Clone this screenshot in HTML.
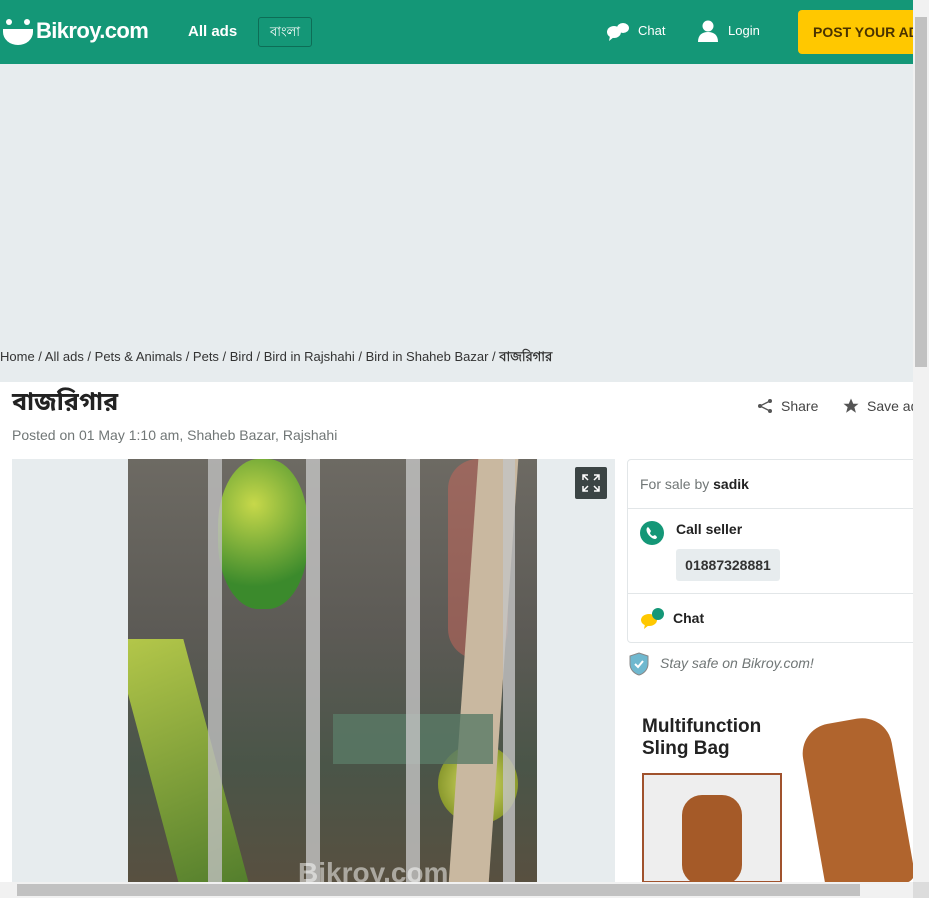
<!DOCTYPE html>
<html><head><meta charset="utf-8"><style>
*{box-sizing:border-box;margin:0;padding:0}
body{width:929px;height:898px;overflow:hidden;position:relative;background:#fff;font-family:"Liberation Sans","Noto Sans CJK SC",sans-serif;color:#222}
.hdr{position:absolute;left:0;top:0;width:913px;height:64px;background:#149777;color:#fff}
.ab{position:absolute}
.gray{position:absolute;left:0;top:64px;width:913px;height:318px;background:#e7ecee}
.crumb{position:absolute;left:0;top:348px;font-size:13px;color:#333;white-space:nowrap}
.card{position:absolute;left:627px;top:459px;width:300px;height:184px;border:1px solid #e2e6e8;border-radius:4px;background:#fff}
</style></head><body>
<div class="hdr">
 <svg class="ab" style="left:2px;top:18px" width="32" height="28" viewBox="0 0 32 28"><circle cx="7" cy="4" r="3" fill="#fff"/><circle cx="25" cy="4" r="3" fill="#fff"/><path d="M1 11h30v3a15 13 0 0 1-30 0z" fill="#fff"/></svg>
 <div class="ab" style="left:36px;top:18px;font-size:22px;font-weight:bold;letter-spacing:-0.6px">Bikroy.com</div>
 <div class="ab" style="left:188px;top:23px;font-size:15px;font-weight:bold">All ads</div>
 <div class="ab" style="left:258px;top:17px;width:54px;height:30px;border:1px solid #0d6d56;border-radius:3px;font-size:13px;text-align:center;line-height:28px">বাংলা</div>
 <svg class="ab" style="left:606px;top:22px" width="24" height="20" viewBox="0 0 24 20"><ellipse cx="8" cy="10" rx="7" ry="6" fill="#fff"/><path d="M4 14l-1 5 5-4z" fill="#fff"/><ellipse cx="17" cy="6" rx="6" ry="5" fill="#fff"/></svg>
 <div class="ab" style="left:638px;top:23px;font-size:13px">Chat</div>
 <svg class="ab" style="left:697px;top:20px" width="22" height="22" viewBox="0 0 22 22"><circle cx="11" cy="6" r="5.5" fill="#fff"/><path d="M1 22c0-7 4-10 10-10s10 3 10 10z" fill="#fff"/></svg>
 <div class="ab" style="left:728px;top:23px;font-size:13px">Login</div>
 <div class="ab" style="left:798px;top:10px;width:130px;height:44px;background:#ffc800;border-radius:4px;color:#4a3300;font-weight:bold;font-size:14px;line-height:44px;padding-left:15px;white-space:nowrap;overflow:hidden">POST YOUR AD</div>
</div>
<div class="gray"></div>
<div class="crumb">Home / All ads / Pets &amp; Animals / Pets / Bird / Bird in Rajshahi / Bird in Shaheb Bazar / <b>বাজরিগার</b></div>
<div class="ab" style="left:12px;top:388px;font-size:25px;font-weight:bold;font-family:'Liberation Sans','Noto Sans Bengali','Lohit Bengali',sans-serif">বাজরিগার</div>
<div class="ab" style="left:12px;top:427px;font-size:14px;color:#707676">Posted on 01 May 1:10 am, Shaheb Bazar, Rajshahi</div>
<svg class="ab" style="left:757px;top:398px" width="16" height="16" viewBox="0 0 16 16"><circle cx="13" cy="3" r="2" fill="#555"/><circle cx="3" cy="8" r="2" fill="#555"/><circle cx="13" cy="13" r="2" fill="#555"/><path d="M13 3L3 8l10 5" stroke="#555" stroke-width="1.3" fill="none"/></svg>
<div class="ab" style="left:781px;top:398px;font-size:14px;color:#444">Share</div>
<svg class="ab" style="left:842px;top:397px" width="18" height="18" viewBox="0 0 24 24"><path d="M12 2l3 7h7l-5.5 4.5 2 7.5L12 16.5 5.5 21l2-7.5L2 9h7z" fill="#555"/></svg>
<div class="ab" style="left:867px;top:398px;font-size:14px;color:#444;width:46px;overflow:hidden;white-space:nowrap">Save ad</div>

<div class="ab" style="left:12px;top:459px;width:603px;height:439px;background:#e7ecee"></div>
<div class="ab" style="left:128px;top:459px;width:409px;height:439px;overflow:hidden;background:linear-gradient(180deg,#6d6a63 0%,#5c5a55 40%,#4a5548 70%,#5a4f3f 100%)">
 <div class="ab" style="left:90px;top:0;width:90px;height:150px;border-radius:45%;background:radial-gradient(circle at 40% 30%,#c7d84a,#3b8a2c 70%)"></div>
 <div class="ab" style="left:20px;top:180px;width:70px;height:259px;background:linear-gradient(160deg,#b5c84a,#4e7a2b);transform:skewX(15deg)"></div>
 <div class="ab" style="left:310px;top:285px;width:80px;height:80px;border-radius:50%;background:radial-gradient(circle,#dde36a,#8b9a2e 70%)"></div>
 <div class="ab" style="left:320px;top:0;width:60px;height:200px;background:#c9655a;opacity:.5;border-radius:30px"></div>
 <div class="ab" style="left:335px;top:0;width:40px;height:439px;background:#c9b8a0;transform:skewX(-4deg)"></div>
 <div class="ab" style="left:205px;top:255px;width:160px;height:50px;background:#5a7a66;opacity:.8"></div>
 <div class="ab" style="left:80px;top:0;width:14px;height:439px;background:#bfbfbf;opacity:.8"></div>
 <div class="ab" style="left:178px;top:0;width:14px;height:439px;background:#c4c4c4;opacity:.8"></div>
 <div class="ab" style="left:278px;top:0;width:14px;height:439px;background:#c4c4c4;opacity:.8"></div>
 <div class="ab" style="left:375px;top:0;width:12px;height:439px;background:#c4c4c4;opacity:.8"></div>
 <div class="ab" style="left:170px;top:398px;font-size:28px;color:#fff;opacity:.5;font-weight:bold">Bikroy.com</div>
</div>
<div class="ab" style="left:575px;top:467px;width:32px;height:32px;background:#3b4444;border-radius:2px"></div>
<svg class="ab" style="left:582px;top:474px" width="18" height="18" viewBox="0 0 18 18" stroke="#fff" stroke-width="1.5" fill="none"><path d="M1 6V1h5M12 1h5v5M17 12v5h-5M6 17H1v-5M1 1l5 5M17 1l-5 5M17 17l-5-5M1 17l5-5"/></svg>

<div class="card">
 <div class="ab" style="left:12px;top:16px;font-size:14px;color:#707676">For sale by <b style="color:#222">sadik</b></div>
 <div class="ab" style="left:0;top:48px;width:300px;border-top:1px solid #e2e6e8"></div>
 <svg class="ab" style="left:12px;top:61px" width="24" height="24" viewBox="0 0 24 24"><circle cx="12" cy="12" r="12" fill="#149777"/><path d="M8 6c-2 1-2 4 0 7s5 5 7 5c1 0 2-1 2-2l-2-2-2 1c-1 0-3-2-3-3l1-2-2-3z" fill="#fff"/></svg>
 <div class="ab" style="left:48px;top:61px;font-size:14px;font-weight:bold">Call seller</div>
 <div class="ab" style="left:48px;top:89px;width:104px;height:32px;background:#e7ecee;border-radius:3px;font-size:14px;font-weight:bold;line-height:32px;text-align:center;color:#333">01887328881</div>
 <div class="ab" style="left:0;top:133px;width:300px;border-top:1px solid #e2e6e8"></div>
 <svg class="ab" style="left:12px;top:147px" width="26" height="22" viewBox="0 0 26 22"><ellipse cx="9" cy="13" rx="8" ry="6" fill="#ffc800"/><path d="M5 17l-1 5 5-4z" fill="#ffc800"/><circle cx="18" cy="7" r="6" fill="#149777"/></svg>
 <div class="ab" style="left:45px;top:150px;font-size:14px;font-weight:bold">Chat</div>
</div>
<svg class="ab" style="left:629px;top:652px" width="20" height="24" viewBox="0 0 20 24"><path d="M10 1l9 3v8c0 6-5 10-9 11C6 22 1 18 1 12V4z" fill="#6fb8cf" stroke="#888"/><path d="M6 12l3 3 5-6" stroke="#fff" stroke-width="2" fill="none"/></svg>
<div class="ab" style="left:660px;top:655px;font-size:14px;font-style:italic;color:#707676">Stay safe on Bikroy.com!</div>

<div class="ab" style="left:632px;top:700px;width:281px;height:182px;background:#fff;overflow:hidden">
 <div class="ab" style="left:10px;top:16px;font-size:19px;font-weight:bold;line-height:22px;color:#222">Multifunction<br>Sling Bag</div>
 <div class="ab" style="left:10px;top:73px;width:140px;height:110px;border:2px solid #a0522d;background:#eee"></div>
 <div class="ab" style="left:50px;top:95px;width:60px;height:90px;background:#a55a28;border-radius:20px"></div>
 <div class="ab" style="left:180px;top:20px;width:90px;height:170px;background:#b0642d;border-radius:30px 30px 10px 10px;transform:rotate(-10deg)"></div>
</div>

<div class="ab" style="left:913px;top:0;width:16px;height:898px;background:#f1f1f1"></div>
<div class="ab" style="left:915px;top:17px;width:12px;height:350px;background:#c1c1c1"></div>
<div class="ab" style="left:0;top:882px;width:913px;height:16px;background:#f1f1f1"></div>
<div class="ab" style="left:17px;top:884px;width:843px;height:12px;background:#c1c1c1"></div>
<div class="ab" style="left:913px;top:882px;width:16px;height:16px;background:#dcdcdc"></div>
</body></html>
